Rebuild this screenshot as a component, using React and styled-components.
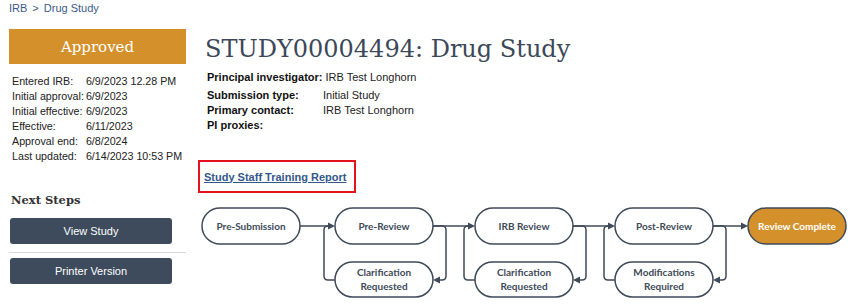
import React from "react";
import styled, { createGlobalStyle } from "styled-components";

const GlobalStyle = createGlobalStyle`
  html, body {
    margin: 0;
    padding: 0;
    background: #ffffff;
  }
  body {
    font-family: "Liberation Sans", Arial, sans-serif;
    font-size: 11px;
    color: #1f1f1f;
  }
`;

const Page = styled.div`
  width: 855px;
  height: 305px;
  overflow: hidden;
  padding: 1px 0 0 9px;
  box-sizing: border-box;
`;

const Breadcrumb = styled.div`
  height: 14px;
  line-height: 14px;
  color: #3b5a8a;
  font-size: 11px;
  a {
    color: inherit;
    text-decoration: none;
  }
  span {
    margin: 0 5px;
  }
`;

const Columns = styled.div`
  display: flex;
  gap: 11px;
  margin-top: 14px;
`;

const Sidebar = styled.aside`
  width: 177px;
  flex: none;
`;

const StatusBanner = styled.div`
  height: 35px;
  background: #d4912b;
  color: #fff;
  display: flex;
  align-items: center;
  justify-content: center;
  font-family: "DejaVu Serif", serif;
  font-size: 15px;
`;

const InfoTable = styled.div`
  display: grid;
  grid-template-columns: max-content 1fr;
  column-gap: 2px;
  margin: 10px 0 0 3px;
  line-height: 15px;
  font-size: 10.7px;
  color: #222;
  white-space: nowrap;
`;

const SectionTitle = styled.h3`
  margin: 27px 0 0 2px;
  font-family: "DejaVu Serif", serif;
  font-weight: bold;
  font-size: 11.5px;
  line-height: 18px;
  color: #333;
`;

const ActionButton = styled.button`
  display: block;
  width: 162px;
  height: 26px;
  margin-left: 1px;
  border: none;
  border-radius: 3px;
  background: #3d4b5c;
  color: #fff;
  font-family: "Liberation Sans", Arial, sans-serif;
  font-size: 11px;
  cursor: pointer;
`;

const FirstButton = styled(ActionButton)`
  margin-top: 9px;
`;

const Divider = styled.hr`
  border: none;
  border-top: 1px solid #d8d8d8;
  margin: 8px 0 5px 0;
`;

const Main = styled.main`
  flex: 1;
`;

const Title = styled.h1`
  margin: 4px 0 0 8px;
  font-family: "DejaVu Serif", serif;
  font-weight: normal;
  font-size: 24px;
  line-height: 32px;
  color: #3b4859;
  white-space: nowrap;
`;

const MetaList = styled.div`
  margin: 5px 0 0 10px;
  font-size: 11px;
  color: #222;
`;

const MetaRow = styled.div`
  display: grid;
  grid-template-columns: 116px 1fr;
  line-height: 15px;
  white-space: nowrap;
  &:first-child {
    display: flex;
    gap: 3px;
    margin-bottom: 3px;
  }
  b {
    font-weight: bold;
    color: #111;
  }
`;

const HighlightBox = styled.div`
  display: inline-flex;
  align-items: center;
  height: 29px;
  margin: 27px 0 0 1px;
  padding: 0 8px 0 4px;
  border: 2px solid #e5141c;
`;

const ReportLink = styled.a`
  color: #33578a;
  font-weight: bold;
  font-size: 11px;
  text-decoration: underline;
`;

const Diagram = styled.svg`
  display: block;
  margin-top: 7px;
`;

const STROKE = "#3e4a59";

function Node({ x, y, w = 98, h = 36, lines, done }) {
  const cx = x + w / 2;
  const cy = y + h / 2;
  return (
    <g>
      <rect
        x={x}
        y={y}
        width={w}
        height={h}
        rx={h / 2}
        fill={done ? "#d4912b" : "#fff"}
        stroke={STROKE}
        strokeWidth="1.5"
      />
      {lines.map((t, i) => (
        <text
          key={t}
          x={cx}
          y={cy + 3.6 + (i - (lines.length - 1) / 2) * 13.5}
          textAnchor="middle"
          fontFamily="Lato, 'Open Sans', sans-serif"
          fontWeight="bold"
          fontSize="10"
          fill={done ? "#fff" : STROKE}
        >
          {t}
        </text>
      ))}
    </g>
  );
}

function ArrowRight({ x, y }) {
  return <path d={`M${x} ${y} l-7 -3.5 v7 z`} fill={STROKE} />;
}

function ArrowLeft({ x, y }) {
  return <path d={`M${x} ${y} l7 -3.5 v7 z`} fill={STROKE} />;
}

// review stage with a loop back to a side step below it
function Loop({ x, w = 98 }) {
  const right = x + w;
  return (
    <g fill="none" stroke={STROKE} strokeWidth="1.5">
      <path d={`M${right} 226 H${right + 9} q4 0 4 4 V276 q0 4 -4 4 H${right + 4}`} />
      <path d={`M${x} 280 H${x - 7} q-4 0 -4 -4 V230 q0 -4 4 -4 H${x - 4}`} />
    </g>
  );
}

function Workflow() {
  const xs = [202, 335, 475, 615, 748];
  return (
    <Diagram width="658" height="105" viewBox="197 200 658 105">
      <g stroke={STROKE} strokeWidth="1.5">
        <line x1={300} y1={226} x2={330} y2={226} />
        <line x1={433} y1={226} x2={470} y2={226} />
        <line x1={573} y1={226} x2={610} y2={226} />
        <line x1={713} y1={226} x2={743} y2={226} />
      </g>
      <Loop x={xs[1]} />
      <Loop x={xs[2]} />
      <Loop x={xs[3]} />
      {xs.slice(1).map((x) => (
        <ArrowRight key={x} x={x} y={226} />
      ))}
      {xs.slice(1, 4).map((x) => (
        <ArrowLeft key={x} x={x + 98} y={280} />
      ))}
      <Node x={xs[0]} y={208} lines={["Pre-Submission"]} />
      <Node x={xs[1]} y={208} lines={["Pre-Review"]} />
      <Node x={xs[2]} y={208} lines={["IRB Review"]} />
      <Node x={xs[3]} y={208} lines={["Post-Review"]} />
      <Node x={xs[4]} y={208} lines={["Review Complete"]} done />
      <Node x={xs[1]} y={262} h={35} lines={["Clarification", "Requested"]} />
      <Node x={xs[2]} y={262} h={35} lines={["Clarification", "Requested"]} />
      <Node x={xs[3]} y={262} h={35} lines={["Modifications", "Required"]} />
    </Diagram>
  );
}

const dates = [
  ["Entered IRB:", "6/9/2023 12.28 PM"],
  ["Initial approval:", "6/9/2023"],
  ["Initial effective:", "6/9/2023"],
  ["Effective:", "6/11/2023"],
  ["Approval end:", "6/8/2024"],
  ["Last updated:", "6/14/2023 10:53 PM"],
];

const meta = [
  ["Principal investigator:", "IRB Test Longhorn"],
  ["Submission type:", "Initial Study"],
  ["Primary contact:", "IRB Test Longhorn"],
  ["PI proxies:", ""],
];

export default function App() {
  return (
    <>
      <GlobalStyle />
      <Page>
        <Breadcrumb>
          <a href="#">IRB</a>
          <span>&gt;</span>
          <a href="#">Drug Study</a>
        </Breadcrumb>
        <Columns>
          <Sidebar>
            <StatusBanner>Approved</StatusBanner>
            <InfoTable>
              {dates.map(([k, v]) => (
                <React.Fragment key={k}>
                  <div>{k}</div>
                  <div>{v}</div>
                </React.Fragment>
              ))}
            </InfoTable>
            <SectionTitle>Next Steps</SectionTitle>
            <FirstButton>View Study</FirstButton>
            <Divider />
            <ActionButton>Printer Version</ActionButton>
          </Sidebar>
          <Main>
            <Title>STUDY00004494: Drug Study</Title>
            <MetaList>
              {meta.map(([k, v]) => (
                <MetaRow key={k}>
                  <b>{k}</b>
                  <span>{v}</span>
                </MetaRow>
              ))}
            </MetaList>
            <HighlightBox>
              <ReportLink href="#">Study Staff Training Report</ReportLink>
            </HighlightBox>
            <Workflow />
          </Main>
        </Columns>
      </Page>
    </>
  );
}
